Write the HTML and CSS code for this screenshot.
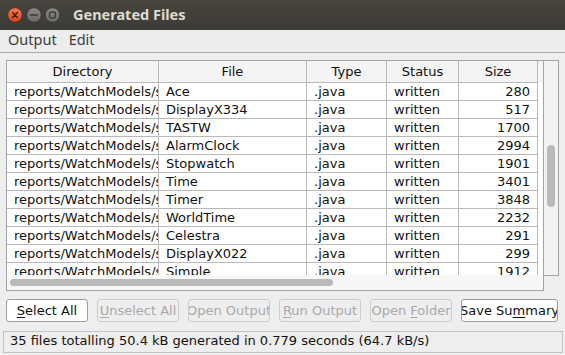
FILE: index.html
```html
<!DOCTYPE html>
<html>
<head>
<meta charset="utf-8">
<link rel="stylesheet" href="styles.css">
</head>
<body>
<div class="window">
  <div class="titlebar">
    <svg class="wbtns" width="65" height="30" viewBox="0 0 65 30">
      <defs>
        <linearGradient id="gc" x1="0" y1="0" x2="0" y2="1">
          <stop offset="0" stop-color="#f47a52"/>
          <stop offset="1" stop-color="#d8451c"/>
        </linearGradient>
        <linearGradient id="gg" x1="0" y1="0" x2="0" y2="1">
          <stop offset="0" stop-color="#8a8984"/>
          <stop offset="1" stop-color="#6b6a66"/>
        </linearGradient>
      </defs>
      <circle cx="15" cy="15" r="7.3" fill="url(#gc)" stroke="#3a2a22" stroke-width="0.8"/>
      <path d="M12.6 12.6 L17.4 17.4 M17.4 12.6 L12.6 17.4" stroke="#4a1a0c" stroke-width="1.4" stroke-linecap="round"/>
      <circle cx="34" cy="15" r="7.3" fill="url(#gg)" stroke="#33322e" stroke-width="0.8"/>
      <path d="M30.6 15 L37.4 15" stroke="#3a3935" stroke-width="1.6" stroke-linecap="round"/>
      <circle cx="52.5" cy="15" r="7.3" fill="url(#gg)" stroke="#33322e" stroke-width="0.8"/>
      <rect x="49.6" y="12.1" width="5.8" height="5.8" rx="0.8" fill="none" stroke="#3a3935" stroke-width="1.3"/>
    </svg>
    <div class="title">Generated Files</div>
  </div>
  <div class="menubar">
    <span class="menu">Output</span>
    <span class="menu">Edit</span>
  </div>
  <div class="content">
    <div class="scrollpane">
      <div class="viewport">
        <div class="row head">
          <div class="cell c">Directory</div>
          <div class="cell c">File</div>
          <div class="cell c">Type</div>
          <div class="cell c">Status</div>
          <div class="cell c">Size</div>
          <div class="fill"></div>
        </div>
        <div class="tbody">
          <div class="row"><div class="cell">reports/WatchModels/s</div><div class="cell">Ace</div><div class="cell">.java</div><div class="cell">written</div><div class="cell r">280</div><div class="fill"></div></div>
          <div class="row"><div class="cell">reports/WatchModels/s</div><div class="cell">DisplayX334</div><div class="cell">.java</div><div class="cell">written</div><div class="cell r">517</div><div class="fill"></div></div>
          <div class="row"><div class="cell">reports/WatchModels/s</div><div class="cell">TASTW</div><div class="cell">.java</div><div class="cell">written</div><div class="cell r">1700</div><div class="fill"></div></div>
          <div class="row"><div class="cell">reports/WatchModels/s</div><div class="cell">AlarmClock</div><div class="cell">.java</div><div class="cell">written</div><div class="cell r">2994</div><div class="fill"></div></div>
          <div class="row"><div class="cell">reports/WatchModels/s</div><div class="cell">Stopwatch</div><div class="cell">.java</div><div class="cell">written</div><div class="cell r">1901</div><div class="fill"></div></div>
          <div class="row"><div class="cell">reports/WatchModels/s</div><div class="cell">Time</div><div class="cell">.java</div><div class="cell">written</div><div class="cell r">3401</div><div class="fill"></div></div>
          <div class="row"><div class="cell">reports/WatchModels/s</div><div class="cell">Timer</div><div class="cell">.java</div><div class="cell">written</div><div class="cell r">3848</div><div class="fill"></div></div>
          <div class="row"><div class="cell">reports/WatchModels/s</div><div class="cell">WorldTime</div><div class="cell">.java</div><div class="cell">written</div><div class="cell r">2232</div><div class="fill"></div></div>
          <div class="row"><div class="cell">reports/WatchModels/s</div><div class="cell">Celestra</div><div class="cell">.java</div><div class="cell">written</div><div class="cell r">291</div><div class="fill"></div></div>
          <div class="row"><div class="cell">reports/WatchModels/s</div><div class="cell">DisplayX022</div><div class="cell">.java</div><div class="cell">written</div><div class="cell r">299</div><div class="fill"></div></div>
          <div class="row"><div class="cell">reports/WatchModels/s</div><div class="cell">Simple</div><div class="cell">.java</div><div class="cell">written</div><div class="cell r">1912</div><div class="fill"></div></div>
        </div>
      </div>
      <div class="vscroll"><div class="vthumb"></div></div>
      <div class="hscroll"><div class="hthumb"></div></div>
    </div>
    <div class="buttons">
      <div class="btn"><span><u>S</u>elect All</span></div>
      <div class="btn off"><span><u>U</u>nselect All</span></div>
      <div class="btn off"><span>Open Output</span></div>
      <div class="btn off"><span><u>R</u>un Output</span></div>
      <div class="btn off"><span>Open <u>F</u>older</span></div>
      <div class="btn wide"><span>Save Su<u>m</u>mary</span></div>
    </div>
    <div class="status">35 files totalling 50.4 kB generated in 0.779 seconds (64.7 kB/s)</div>
  </div>
</div>
</body>
</html>
```
FILE: styles.css
```css
html, body {
  margin: 0;
  padding: 0;
}
body {
  width: 565px;
  height: 355px;
  overflow: hidden;
  background: #eeeeee;
  font-family: "DejaVu Sans", sans-serif;
  font-size: 13px;
  color: #111;
}
.window {
  width: 565px;
  height: 355px;
  background: #eeeeee;
}
.titlebar {
  height: 30px;
  display: flex;
  align-items: flex-start;
  background: linear-gradient(#46453f, #3c3b37);
}
.wbtns {
  display: block;
  flex: none;
}
.title {
  padding-left: 8px;
  font-family: "Noto Sans", sans-serif;
  font-weight: bold;
  font-size: 14.5px;
  line-height: 29px;
  color: #dfdbd2;
}
.menubar {
  height: 19px;
  padding: 0 0 3px 2px;
  border-bottom: 1px solid #a9a9a9;
  display: flex;
  font-family: "Noto Sans", sans-serif;
  font-size: 14.5px;
  line-height: 19px;
  color: #3c3c3c;
  background: #ededed;
}
.menu {
  padding: 0 6px;
}
.content {
  padding-top: 7px;
}
.scrollpane {
  margin-left: 6px;
  display: grid;
  grid-template-columns: 538px 15px;
  grid-template-rows: 215px 16px;
}
.viewport {
  grid-row: 1;
  grid-column: 1;
  border: 1px solid #a4a4a4;
  border-bottom: none;
  background: #ffffff;
  overflow: hidden;
}
.row {
  display: grid;
  grid-template-columns: 152px 148px 80px 72px 79px 5px;
  height: 18px;
}
.row.head {
  height: 22px;
  background: #f4f4f4;
}
.cell {
  border-right: 1px solid #b9b9b9;
  border-bottom: 1px solid #b9b9b9;
  padding: 0 7px;
  line-height: 17px;
  white-space: nowrap;
  overflow: hidden;
}
.head .cell {
  line-height: 21px;
  padding: 0 2px;
}
.cell.c {
  text-align: center;
}
.cell.r {
  text-align: right;
}
.tbody {
  height: 192px;
  overflow: hidden;
}
.vscroll {
  grid-row: 1;
  grid-column: 2;
  height: 214px;
  border-top: 1px solid #a4a4a4;
  border-right: 1px solid #a4a4a4;
  border-bottom: 1px solid #a4a4a4;
  background: #f2f2f2;
}
.vthumb {
  margin: 84px 0 0 3px;
  width: 8px;
  height: 62px;
  border-radius: 4px;
  background: #b9b9b9;
}
.hscroll {
  grid-row: 2;
  grid-column: 1;
  border: 1px solid #a4a4a4;
  border-top: none;
  background: #f7f7f7;
  padding: 4px 0 0 3px;
  box-sizing: border-box;
}
.hthumb {
  width: 323px;
  height: 7px;
  border-radius: 4px;
  background: #b9b9b9;
}
.buttons {
  margin: 8px 0 0 6px;
  display: flex;
  gap: 9px;
}
.btn {
  box-sizing: border-box;
  width: 82px;
  height: 23px;
  border: 1px solid #9e9e9e;
  border-radius: 3px;
  background: #ffffff;
  display: flex;
  justify-content: center;
  overflow: hidden;
  line-height: 21px;
  white-space: nowrap;
  color: #111;
}
.btn span {
  flex: none;
}
.btn.off {
  border-color: #cdcdcd;
  background: #eeeeee;
  color: #a9a9a9;
}
.btn.wide {
  width: 97px;
}
.btn u {
  text-decoration-thickness: 1px;
  text-underline-offset: 2px;
}
.status {
  margin: 9px 0 0 3px;
  box-sizing: border-box;
  width: 560px;
  height: 22px;
  border: 1px solid #c2c2c2;
  padding: 0 6px 2px 6px;
  line-height: 18px;
  white-space: nowrap;
  color: #111;
}
```
